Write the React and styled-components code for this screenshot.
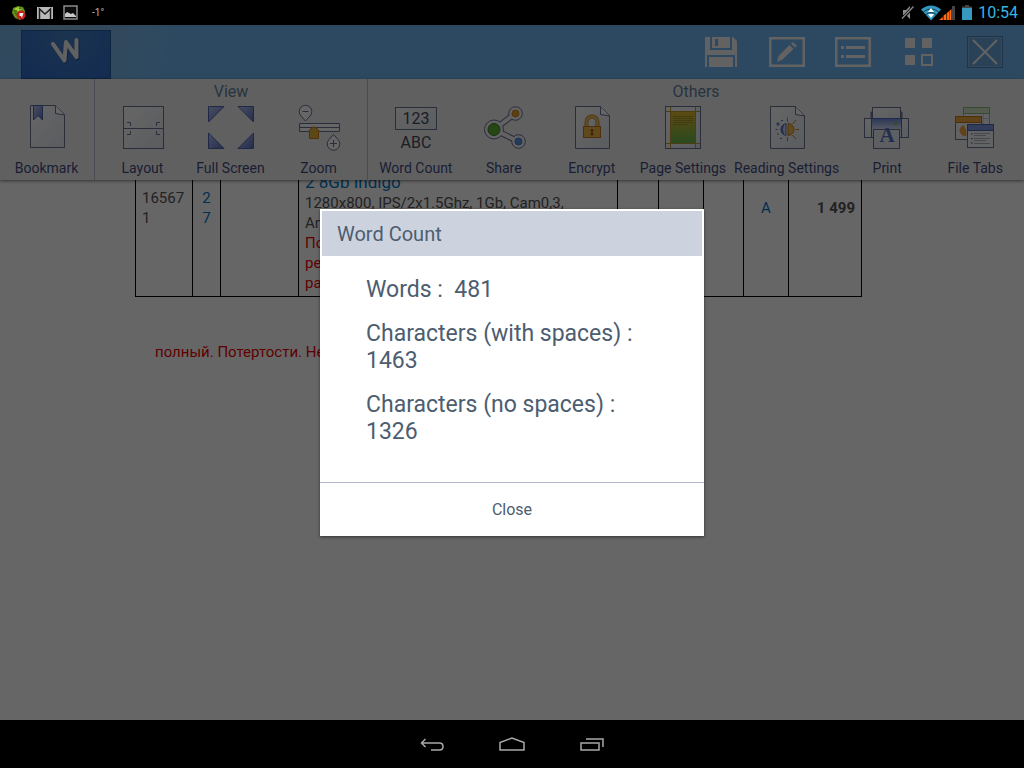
import React from 'react'
import styled, { createGlobalStyle } from 'styled-components';

const GlobalStyle = createGlobalStyle`
  *{
    box-sizing:border-box;
  }
  body{
    margin:0;
    background:black;
    font-family:Roboto, "Noto Sans", sans-serif;
  }
  button{
    font-family:inherit;
    border:0;
    padding:0;
    background:none;
    cursor:pointer;
  }
  svg{
    display:block;
  }
`

// status bar icons

const AvIcon = () => (
  <svg width="16" height="16" viewBox="0 0 16 16">
    <path d="M2 3L7 1L12 2L14 6L14 11L9 15L4 13L1 8Z" fill="#5f8f16" />
    <path d="M3 4L7 2L11 4L7 7Z" fill="#a5cf3a" />
    <path d="M4 8L7 10M3 6L6 6M8 4L10 3" stroke="#2d5208" />
    <circle cx="10" cy="10" r="4.500" fill="#c4201d" />
    <path d="M8.500 8H12.500L11 13L10 11H8.500Z" fill="#eee" />
  </svg>
)

const MailIcon = () => (
  <svg width="16" height="12" viewBox="0 0 16 12">
    <rect width="16" height="12" fill="#b9b9b9" />
    <path d="M2.500 12V2L8 7L13.500 2V12" fill="none" stroke="#1c1c1c" strokeWidth="1.500" />
  </svg>
)

const PictureIcon = () => (
  <svg width="15" height="15" viewBox="0 0 15 15">
    <rect x="1" y="1" width="13" height="13" fill="#0c0c0c" stroke="#8b8b8b" strokeWidth="1.500" />
    <path d="M2 12V9L4 7L6 8L8 9L10 8L13 11V12Z" fill="#c9c9c9" />
  </svg>
)

const MuteIcon = () => (
  <svg width="14" height="15" viewBox="0 0 14 15">
    <path d="M2 5H5L9 1V14L5 10H2Z" fill="#8a8a8a" />
    <path d="M1 14L13 1" stroke="#000" strokeWidth="3" />
    <path d="M1 13.500L12.500 1.500" stroke="#8a8a8a" strokeWidth="1.300" />
  </svg>
)

const WifiIcon = () => (
  <svg width="35" height="16" viewBox="0 0 35 16">
    <path d="M0 4.500Q10 -3.500 20 4.500L10 15.500Z" fill="#3099bf" />
    <path d="M2.500 6.800Q10 1 17.500 6.800M5 9.600Q10 5.500 15 9.600" fill="none" stroke="#000" strokeWidth="0.600" />
    <path d="M10 3L13 7H7ZM10 13L13 9H7Z" fill="#fff" />
    <path d="M18 15L22 12V15ZM22.500 15V10.500L25.500 8.500V15ZM26 15V8L30.500 4V15Z" fill="#ff6a13" />
    <path d="M22.200 11V15M25.800 8V15M28.500 6V15" stroke="#5c2605" strokeWidth="0.600" />
    <rect x="31" y="1" width="3" height="14" fill="#444" />
  </svg>
)

const BatteryIcon = () => (
  <svg width="10" height="15" viewBox="0 0 10 15">
    <path d="M3 0H7V1.500H10V4H0V1.500H3Z" fill="#444" />
    <rect y="3" width="10" height="12" fill="#3799bd" />
  </svg>
)

// title bar icons

const LogoStroke = styled.path`
  fill:none;
  stroke:${props => props.$shade ? '#24508f' : '#f2f2f2'};
  stroke-width:4px;
  stroke-linecap:round;
  stroke-linejoin:round;
`

const WriterLogo = () => (
  <svg width="32" height="28" viewBox="0 0 32 28">
    <LogoStroke $shade d="M3 7L14.500 23.500L16 5L26.500 20L26.500 3" transform="translate(1 1)" />
    <LogoStroke d="M3 7L14.500 23.500L16 5L26.500 20L26.500 3" />
  </svg>
)

const SaveIcon = () => (
  <svg width="32" height="30" viewBox="0 0 32 30" fill="#f4f4f4">
    <path d="M0 0H5V13H27V0H28L32 4V30H30V18H2V30H0Z" />
    <path fillRule="evenodd" d="M7 0H25V11H7ZM10 2V9H13V2Z" />
    <rect x="4" y="20" width="24" height="10" />
  </svg>
)

const EditIcon = () => (
  <svg width="36" height="30" viewBox="0 0 36 30">
    <rect x="1" y="1" width="34" height="28" fill="none" stroke="#f4f4f4" strokeWidth="3" />
    <path d="M8 25L9.500 19L20.500 8L24.500 12L13.500 22.500ZM22 6.500L24 5L28 9L26 10.500Z" fill="#f4f4f4" />
  </svg>
)

const ListIcon = () => (
  <svg width="36" height="30" viewBox="0 0 36 30">
    <rect x="1" y="1" width="34" height="28" fill="none" stroke="#f4f4f4" strokeWidth="3" />
    <path d="M6 9H9V12H6ZM11 9H30V12H11ZM6 18H9V21H6ZM11 18H30V21H11Z" fill="#f4f4f4" />
  </svg>
)

const GridIcon = () => (
  <svg width="28" height="28" viewBox="0 0 28 28">
    <path d="M0 0H10V10H0ZM17 0H27V10H17ZM0 17H10V27H0Z" fill="#f4f4f4" />
    <rect x="17" y="17" width="10" height="10" fill="none" stroke="#f4f4f4" strokeWidth="2" />
  </svg>
)

const CloseIcon = () => (
  <svg width="36" height="32" viewBox="0 0 36 32">
    <rect x="0.500" y="0.500" width="35" height="31" fill="#68a6dc" stroke="#4f82b0" />
    <rect x="1.500" y="1.500" width="33" height="29" fill="none" stroke="#85b7e2" />
    <path d="M6 4L30 28M30 4L6 28" stroke="#f4f4f4" strokeWidth="2" />
  </svg>
)

// ribbon icons, all on a 48px grid

const Glyph = ({ children }) => (
  <svg width="48" height="48" viewBox="0 0 48 48" fill="none" stroke="#6a7192">
    <defs>
      <linearGradient id="paper" x1="0" y1="0" x2="1" y2="1">
        <stop offset="0" stopColor="#fff" />
        <stop offset="1" stopColor="#e3e6ee" />
      </linearGradient>
      <linearGradient id="blue" x1="0" y1="0" x2="1" y2="1">
        <stop offset="0" stopColor="#b9c8ee" />
        <stop offset="1" stopColor="#5a6fc4" />
      </linearGradient>
      <linearGradient id="field" x1="0" y1="0" x2="0" y2="1">
        <stop offset="0" stopColor="#e8b92c" />
        <stop offset="1" stopColor="#66b84e" />
      </linearGradient>
      <linearGradient id="machine" x1="0" y1="0" x2="0" y2="1">
        <stop offset="0" stopColor="#6f8adb" />
        <stop offset="0.600" stopColor="#dde5fa" />
      </linearGradient>
    </defs>
    {children}
  </svg>
)

const Sheet = () => (
  <g>
    <path d="M7.500 2.500H32.500L41.500 11.500V44.500H7.500Z" fill="url(#paper)" />
    <path d="M32.500 2.500V10.500L41.500 12" fill="#fff" />
  </g>
)

const BookmarkGlyph = () => (
  <Glyph>
    <path d="M7.500 1.500H32.500L41.500 10.500V43.500H7.500Z" fill="url(#paper)" />
    <path d="M32.500 1.500V9.500L41.500 11" fill="#fff" />
    <path d="M10.500 1.500H19.500V16L15 11.500L10.500 16Z" fill="url(#blue)" stroke="#5264b4" />
  </Glyph>
)

const LayoutGlyph = () => (
  <Glyph>
    <rect x="4.500" y="2.500" width="40" height="42" fill="url(#paper)" />
    <path d="M4 24.500H45M8 18.500H11.500V22M41 18.500H37.500V22M8 30.500H11.500V27M41 30.500H37.500V27" />
  </Glyph>
)

const FullScreenGlyph = () => (
  <Glyph>
    <g fill="url(#blue)" stroke="#5264b4">
      <path d="M1.500 2.500H17L1.500 18Z" />
      <path d="M46.500 2.500H31L46.500 18Z" />
      <path d="M1.500 44.500V29L17 44.500Z" />
      <path d="M46.500 44.500V29L31 44.500Z" />
    </g>
  </Glyph>
)

const ZoomGlyph = () => (
  <Glyph>
    <path d="M10.500 17L6 12A6.300 6.300 0 1 1 15 12Z" fill="#fff" />
    <path d="M7.500 7.500H13.500" />
    <path d="M4.500 19.500H44.500V27.500H4.500ZM4.500 23.500H44.500" fill="#fff" />
    <path d="M14.500 26L19 22.500L23.500 26V34.500H14.500Z" fill="#e9b33b" stroke="#cf7a20" />
    <path d="M38.500 30.500L43 35.500A6.300 6.300 0 1 1 34 35.500Z" fill="#fff" />
    <path d="M35 39.500H42M38.500 36V43" />
  </Glyph>
)

const GlyphText = styled.text`
  font-family:${props => props.$serif ? '"Liberation Serif", serif' : 'Roboto, sans-serif'};
  font-size:${props => props.$serif ? 21 : 16}px;
  font-weight:${props => props.$serif ? 700 : 400};
  fill:${props => props.$serif ? '#5673bd' : '#454a5c'};
  stroke:none;
  text-anchor:middle;
`

const WordCountGlyph = () => (
  <Glyph>
    <rect x="3.500" y="3.500" width="41" height="22" fill="url(#paper)" />
    <GlyphText x="24" y="20">123</GlyphText>
    <GlyphText x="24" y="44">ABC</GlyphText>
  </Glyph>
)

const ShareGlyph = () => (
  <Glyph>
    <path d="M14 25.500L35.500 9.500M14 25.500L38.500 37.500" strokeWidth="6" />
    <g fill="#f4f5fa">
      <circle cx="14" cy="25.500" r="9.500" />
      <circle cx="35.500" cy="9.500" r="6.800" />
      <circle cx="38.500" cy="37.500" r="6.800" />
    </g>
    <path d="M14 25.500L35.500 9.500M14 25.500L38.500 37.500" stroke="#f4f5fa" strokeWidth="4" />
    <circle cx="14" cy="25.500" r="6" fill="#5fae35" stroke="#3d7f1c" />
    <circle cx="35.500" cy="9.500" r="3.500" fill="#e8a02c" stroke="#cf8a20" />
    <circle cx="38.500" cy="37.500" r="3.500" fill="#5b95e2" stroke="#4a7cc4" />
  </Glyph>
)

const EncryptGlyph = () => (
  <Glyph>
    <Sheet />
    <path d="M18.500 23V18A5.500 5.500 0 0 1 29.500 18V23" stroke="#c98726" strokeWidth="4" />
    <path d="M18.500 23V18A5.500 5.500 0 0 1 29.500 18V23" stroke="#efc873" strokeWidth="2" />
    <rect x="15.500" y="22.500" width="17" height="11" fill="#efb745" stroke="#c5781d" />
    <path d="M24 25V31M22.500 26.500H25.500M22.500 30.500H25.500" stroke="#a6521b" strokeWidth="1.500" />
  </Glyph>
)

const PageSettingsGlyph = () => (
  <Glyph>
    <rect x="6.500" y="2.500" width="35" height="42" fill="url(#paper)" />
    <rect x="11.500" y="7.500" width="25" height="32" fill="url(#field)" />
    <path d="M11.500 3V44M36.500 3V44M7 7.500H41M7 39.500H41" stroke="#bf9a35" />
    <path d="M14 12.500H34M14 14.500H34M14 16.500H34M14 18.500H34M14 20.500H29" stroke="#ad982c" />
  </Glyph>
)

const ReadingGlyph = () => (
  <Glyph>
    <Sheet />
    <path d="M25 19.500A6 6 0 0 1 25 31.500Z" fill="#efb94c" stroke="#cf8124" />
    <path d="M23 19.500A6.200 6.200 0 0 0 23 31.500Z" fill="#cdd6f3" stroke="#5a70bd" />
    <path d="M20.500 20.500A6.200 6.200 0 0 0 20.500 30.500Q18.500 25.500 20.500 20.500Z" fill="#5a70bd" stroke="#5a70bd" />
    <path d="M24.500 13.500V18M24.500 33V37.500M29.500 20L33 16M32.500 25.500H36M29.500 31L33 35" stroke="#cf8124" />
    <path d="M13 20H17M15 18V22M18 16.500H20M12.500 25.500H14.500M14 30H16M17 34.500H19" stroke="#5a70bd" />
  </Glyph>
)

const PrintGlyph = () => (
  <Glyph>
    <path d="M8 8H39V16H8Z" fill="#8087a0" />
    <rect x="9.500" y="3.500" width="28" height="14" fill="url(#paper)" />
    <rect x="1.500" y="14.500" width="44" height="19" fill="url(#paper)" />
    <rect x="8.500" y="14.500" width="30" height="19" fill="url(#machine)" stroke="#4f66bd" />
    <circle cx="32.500" cy="19.500" r="1.500" fill="#6fc53e" stroke="none" />
    <rect x="10.500" y="25.500" width="26" height="19" fill="#eceef5" />
    <GlyphText x="24" y="38" $serif>A</GlyphText>
  </Glyph>
)

const FileTabsGlyph = () => (
  <Glyph>
    <rect x="12.500" y="3.500" width="26" height="24" fill="#f3f5f7" stroke="#a3a9b8" />
    <rect x="12.500" y="3.500" width="26" height="6" fill="#cfe5c4" stroke="#8fb581" />
    <path d="M32 10V20M32 14.500H39" stroke="#c4cad5" />
    <rect x="4.500" y="12.500" width="26" height="23" fill="#f6f6f8" />
    <rect x="4.500" y="12.500" width="26" height="6" fill="#f0a93c" stroke="#c7741a" />
    <path d="M13 21A5.500 5.500 0 1 0 15.500 32V27Z" fill="#efa84a" stroke="none" />
    <rect x="16.500" y="20.500" width="26" height="23" fill="#f6f7fb" />
    <rect x="16.500" y="20.500" width="26" height="6" fill="#8196de" stroke="#5264b4" />
    <path d="M20 30H21.500M20 34.500H21.500M20 39H21.500" stroke="#444" />
    <path d="M23 29.500H39M23 31.500H35M23 34.500H39M23 36.500H35M23 39.500H39" stroke="#b2b4be" />
  </Glyph>
)

// navigation bar icons

const BackIcon = () => (
  <svg width="24" height="14" viewBox="0 0 24 14" fill="none" stroke="#a9a9a9" strokeWidth="1.500">
    <path d="M5.500 2L1.500 6L5.500 10M2 6H19.500Q23 6 23 9.500Q23 13 19.500 13H11" />
  </svg>
)

const HomeIcon = () => (
  <svg width="26" height="14" viewBox="0 0 26 14" fill="none" stroke="#a9a9a9" strokeWidth="1.500">
    <path d="M1 13V5.500L13 1L25 5.500V13Z" />
  </svg>
)

const RecentIcon = () => (
  <svg width="24" height="14" viewBox="0 0 24 14" fill="none" stroke="#a9a9a9" strokeWidth="1.500">
    <rect x="1" y="6" width="18" height="7" />
    <path d="M6 2H23V10" />
  </svg>
)

const actions = [
  { name: 'Save', icon: <SaveIcon /> },
  { name: 'Edit', icon: <EditIcon /> },
  { name: 'List', icon: <ListIcon /> },
  { name: 'Menu', icon: <GridIcon /> },
  { name: 'Exit', icon: <CloseIcon /> },
]

const groups = [
  {
    title: '',
    tools: [{ name: 'Bookmark', icon: <BookmarkGlyph /> }],
  },
  {
    title: 'View',
    tools: [
      { name: 'Layout', icon: <LayoutGlyph /> },
      { name: 'Full Screen', icon: <FullScreenGlyph /> },
      { name: 'Zoom', icon: <ZoomGlyph /> },
    ],
  },
  {
    title: 'Others',
    tools: [
      { name: 'Word Count', icon: <WordCountGlyph /> },
      { name: 'Share', icon: <ShareGlyph /> },
      { name: 'Encrypt', icon: <EncryptGlyph /> },
      { name: 'Page Settings', icon: <PageSettingsGlyph /> },
      { name: 'Reading Settings', icon: <ReadingGlyph /> },
      { name: 'Print', icon: <PrintGlyph /> },
      { name: 'File Tabs', icon: <FileTabsGlyph /> },
    ],
  },
]

const columns = [57, 28, 78, 319, 41, 45, 40, 45, 73]

export default function App() {
  return (
    <Screen>
      <GlobalStyle />
      <StatusBar>
        <Notices>
          <AvIcon />
          <MailIcon />
          <PictureIcon />
          <Degrees>-1°</Degrees>
        </Notices>
        <Signals>
          <MuteIcon />
          <WifiIcon />
          <BatteryIcon />
          <Clock>10:54</Clock>
        </Signals>
      </StatusBar>

      <Window>
        <TitleBar>
          <LogoButton type="button" aria-label="Writer"><WriterLogo /></LogoButton>
          <Actions>
            {actions.map(action => (
              <ActionButton type="button" key={action.name} aria-label={action.name}>
                {action.icon}
              </ActionButton>
            ))}
          </Actions>
        </TitleBar>

        <Ribbon>
          {groups.map(group => (
            <Group key={group.title}>
              <GroupTitle>{group.title}</GroupTitle>
              <Tools>
                {group.tools.map(tool => (
                  <Tool type="button" key={tool.name}>
                    {tool.icon}
                    <span>{tool.name}</span>
                  </Tool>
                ))}
              </Tools>
            </Group>
          ))}
        </Ribbon>

        <Document>
          <PriceTable>
            <colgroup>
              {columns.map((width, i) => <col key={i} width={width} />)}
            </colgroup>
            <tbody>
              <tr>
                <Cell $pad="16px">16567<br />1</Cell>
                <Cell $pad="16px" $link $align="center">2<br />7</Cell>
                <Cell />
                <Cell>
                  <Model href="#indigo">2 8Gb Indigo</Model><br />
                  1280x800, IPS/2x1.5Ghz, 1Gb, Cam0,3,<br />
                  An<br />
                  <Warning>По<br />ре<br />ра</Warning>
                </Cell>
                <Cell />
                <Cell />
                <Cell />
                <Cell $pad="26px" $link $align="center">A</Cell>
                <Cell $pad="26px" $align="right" $strong>1 499</Cell>
              </tr>
            </tbody>
          </PriceTable>
          <Note><Warning>полный. Потертости. Не</Warning></Note>
        </Document>

        <Backdrop>
          <Dialog role="dialog" aria-labelledby="dialog-title">
            <DialogTitle id="dialog-title">Word Count</DialogTitle>
            <DialogBody>
              <p>Words :&nbsp; 481</p>
              <p>Characters (with spaces) : 1463</p>
              <p>Characters (no spaces) : 1326</p>
            </DialogBody>
            <DialogButton type="button">Close</DialogButton>
          </Dialog>
        </Backdrop>
      </Window>

      <NavBar>
        <NavButton type="button" aria-label="Back"><BackIcon /></NavButton>
        <NavButton type="button" aria-label="Home"><HomeIcon /></NavButton>
        <NavButton type="button" aria-label="Recent apps"><RecentIcon /></NavButton>
      </NavBar>
    </Screen>
  )
}

const Screen = styled.div`
  display:flex;
  flex-direction:column;
  min-height:100vh;
`

const StatusBar = styled.header`
  display:flex;
  justify-content:space-between;
  align-items:center;
  height:25px;
  padding:0 6px 0 11px;
  background:black;
`

const Notices = styled.div`
  display:flex;
  align-items:center;
  gap:10px;
`

const Degrees = styled.span`
  margin-left:4px;
  font-size:10px;
  color:#b5b5b5;
`

const Signals = styled.div`
  display:flex;
  align-items:center;
  gap:6px;
`

const Clock = styled.time`
  font-size:16px;
  line-height:24px;
  color:#33b5e5;
`

const Window = styled.main`
  position:relative;
  display:flex;
  flex-direction:column;
  flex:1;
  background:white;
`

const TitleBar = styled.div`
  display:flex;
  justify-content:space-between;
  align-items:flex-end;
  height:54px;
  padding:0 6px 0 21px;
  background:radial-gradient(circle at 66px 0, #86b4da 0, #71b7f2 110px);
`

const LogoButton = styled.button`
  display:flex;
  justify-content:center;
  width:90px;
  height:49px;
  padding-top:6px;
  background:radial-gradient(circle at 50% 0, #4682c6, #2f6cc8);
  border:1px solid #265c9f;
`

const Actions = styled.div`
  display:flex;
  align-self:stretch;
`

const ActionButton = styled.button`
  display:flex;
  justify-content:center;
  align-items:center;
  width:66px;
`

const Ribbon = styled.div`
  display:grid;
  grid-template-columns:95px 273px 1fr;
  height:101px;
  background:#f1f1f2;
  box-shadow:0 1px 3px rgba(0,0,0,0.5);
  z-index:1;
`

const Group = styled.section`
  border-right:1px solid #b9bfd4;
  &:last-child{
    border-right:0;
  }
`

const GroupTitle = styled.h2`
  height:25px;
  margin:0;
  font-size:16px;
  line-height:25px;
  font-weight:400;
  text-align:center;
  color:#64839f;
`

const Tools = styled.div`
  display:flex;
  justify-content:center;
  padding-right:1px;
`

const Tool = styled.button`
  display:flex;
  flex-direction:column;
  align-items:center;
  gap:8px;
  min-width:88px;
  padding:0 4px;
  font-size:14px;
  line-height:16px;
  white-space:nowrap;
  color:#434d82;
`

const Document = styled.article`
  flex:1;
  overflow:hidden;
  padding-left:135px;
  font-size:15px;
  line-height:20px;
  color:#555;
`

// the page is scrolled, so the row starts under the ribbon
const PriceTable = styled.table`
  table-layout:fixed;
  width:727px;
  height:125px;
  margin-top:-9px;
  border-collapse:collapse;
`

const Cell = styled.td`
  padding:${props => props.$pad || '0'} 6px 3px;
  border:1px solid black;
  vertical-align:top;
  text-align:${props => props.$align || 'left'};
  font-weight:${props => props.$strong ? 700 : 400};
  color:${props => props.$link ? '#0078c8' : 'inherit'};
`

const Model = styled.a`
  font-size:17px;
  text-decoration:none;
  color:#0078c8;
`

const Warning = styled.span`
  color:#f00000;
`

const Note = styled.p`
  margin:45px 0 0 20px;
`

const Backdrop = styled.div`
  position:absolute;
  inset:0;
  z-index:2;
  display:flex;
  justify-content:center;
  align-items:center;
  background:rgba(0,0,0,0.6);
`

const Dialog = styled.section`
  display:flex;
  flex-direction:column;
  width:384px;
  background:white;
  box-shadow:0 1px 3px rgba(0,0,0,0.5);
  color:#4d5d70;
`

const DialogTitle = styled.h1`
  margin:2px 2px 0;
  padding:1px 15px 0;
  font-size:20px;
  line-height:44px;
  font-weight:400;
  background:#ccd3df;
`

const DialogBody = styled.div`
  display:flex;
  flex-direction:column;
  gap:17px;
  padding:20px 46px 37px;
  font-size:23px;
  line-height:27px;
  p{
    margin:0;
  }
`

const DialogButton = styled.button`
  height:54px;
  border-top:1px solid #b4b8cc;
  font-size:16px;
  color:#4d5d70;
`

const NavBar = styled.nav`
  display:flex;
  justify-content:center;
  height:48px;
  background:black;
`

const NavButton = styled.button`
  display:flex;
  justify-content:center;
  align-items:center;
  width:80px;
`
